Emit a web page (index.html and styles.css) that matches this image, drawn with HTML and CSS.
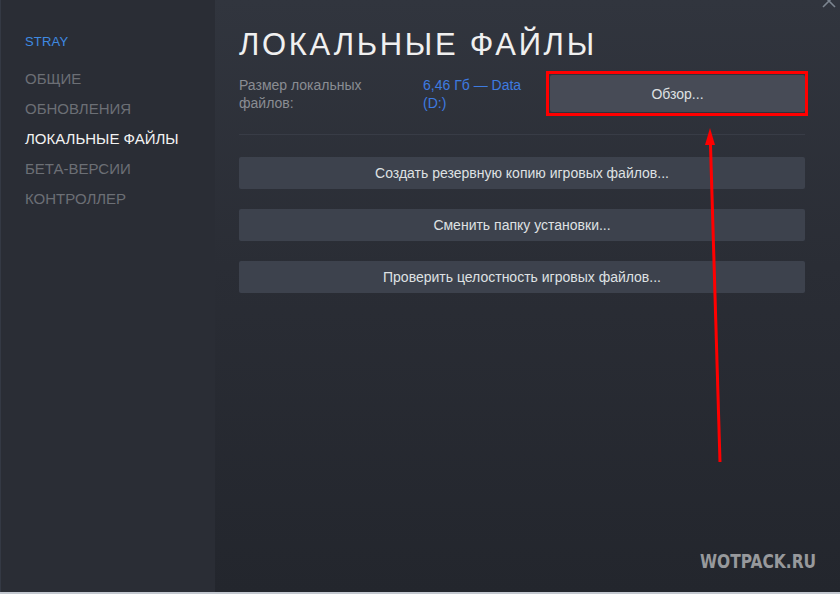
FILE: index.html
```html
<!DOCTYPE html>
<html lang="ru">
<head>
<meta charset="utf-8">
<title>Свойства — STRAY</title>
<link rel="stylesheet" href="styles.css">
</head>
<body>
<div class="window">
  <aside class="sidebar">
    <div class="game">STRAY</div>
    <nav class="nav">
      <div class="nav-item">ОБЩИЕ</div>
      <div class="nav-item">ОБНОВЛЕНИЯ</div>
      <div class="nav-item active">ЛОКАЛЬНЫЕ ФАЙЛЫ</div>
      <div class="nav-item">БЕТА-ВЕРСИИ</div>
      <div class="nav-item">КОНТРОЛЛЕР</div>
    </nav>
  </aside>
  <main class="content">
    <h1 class="title">ЛОКАЛЬНЫЕ ФАЙЛЫ</h1>
    <div class="size-row">
      <div class="size-label">Размер локальных файлов:</div>
      <div class="size-value">6,46 Гб — Data (D:)</div>
      <div class="highlight">
        <button class="btn btn-browse">Обзор...</button>
      </div>
    </div>
    <div class="divider"></div>
    <div class="actions">
      <button class="btn">Создать резервную копию игровых файлов...</button>
      <button class="btn">Сменить папку установки...</button>
      <button class="btn">Проверить целостность игровых файлов...</button>
    </div>
  </main>
  <div class="close">
    <svg width="14" height="14" viewBox="0 0 14 14"><path d="M1 -5 L13 7 M13 -5 L1 7" stroke="#7c8590" stroke-width="1.6" fill="none"/></svg>
  </div>
  <svg class="arrow" width="840" height="594" viewBox="0 0 840 594">
    <line x1="720" y1="462" x2="710.4" y2="142" stroke="#ff0000" stroke-width="3"/>
    <polygon points="710,128 705,145 715,145" fill="#ff0000"/>
  </svg>
  <div class="watermark">WOTPACK.RU</div>
</div>
</body>
</html>
```
FILE: styles.css
```css
html, body {
  margin: 0;
  padding: 0;
  background: #24272e;
}

.window {
  position: relative;
  width: 840px;
  height: 594px;
  display: flex;
  overflow: hidden;
  font-family: "Liberation Sans", Arial, sans-serif;
  border-bottom: 2px solid #c3c8d0;
  box-sizing: border-box;
}

.sidebar {
  width: 215px;
  flex: none;
  background: #2a2d35;
  padding: 34px 0 0 24px;
  box-sizing: border-box;
  border-left: 1px solid #343944;
}

.game {
  font-size: 13px;
  color: #3f8ae2;
  letter-spacing: 0.2px;
  height: 22px;
}

.nav {
  margin-top: 8px;
  display: flex;
  flex-direction: column;
}

.nav-item {
  font-size: 15px;
  line-height: 30px;
  color: #6c6f75;
}

.nav-item.active {
  color: #f2f2f2;
}

.content {
  flex: 1;
  background: linear-gradient(180deg, #31353e 0%, #2a2d35 45%, #23262d 100%);
  padding: 0 35px 0 24px;
}

.title {
  margin: 27px 0 0;
  font-size: 31px;
  font-weight: normal;
  letter-spacing: 2.7px;
  color: #f0f0f0;
  line-height: 36px;
}

.size-row {
  display: flex;
  align-items: flex-start;
  margin-top: 13px;
}

.size-label {
  width: 184px;
  flex: none;
  font-size: 14px;
  line-height: 18px;
  color: #8a8d93;
  padding-right: 50px;
  box-sizing: border-box;
}

.size-value {
  width: 123px;
  flex: none;
  font-size: 14px;
  line-height: 18px;
  color: #3e7be0;
  padding-right: 10px;
  box-sizing: border-box;
}

/* red annotation frame around the browse button */
.highlight {
  flex: 1;
  margin: -5px -3px 0 0;
  border: 3px solid #ff0000;
  padding: 1px 0 1px 1px;
}

.btn {
  display: block;
  border: none;
  border-radius: 2px;
  background: #3d424d;
  color: #dfe1e3;
  font-family: "Liberation Sans", Arial, sans-serif;
  font-size: 14px;
  height: 32px;
  width: 100%;
  padding: 0;
  text-align: center;
}

.btn-browse {
  height: 37px;
  background: #474b56;
}

.divider {
  height: 1px;
  background: #383c46;
  margin-top: 18px;
}

.actions {
  display: flex;
  flex-direction: column;
  gap: 20px;
  margin-top: 22px;
}

.close {
  position: absolute;
  top: 0;
  right: 4px;
  line-height: 0;
}

.arrow {
  position: absolute;
  left: 0;
  top: 0;
  pointer-events: none;
}

.watermark {
  position: absolute;
  right: 24px;
  bottom: 19px;
  font-family: "DejaVu Sans Condensed", "DejaVu Sans", sans-serif;
  font-weight: bold;
  font-size: 20px;
  color: #97999c;
  transform: scaleX(0.86);
  transform-origin: right center;
}
```
